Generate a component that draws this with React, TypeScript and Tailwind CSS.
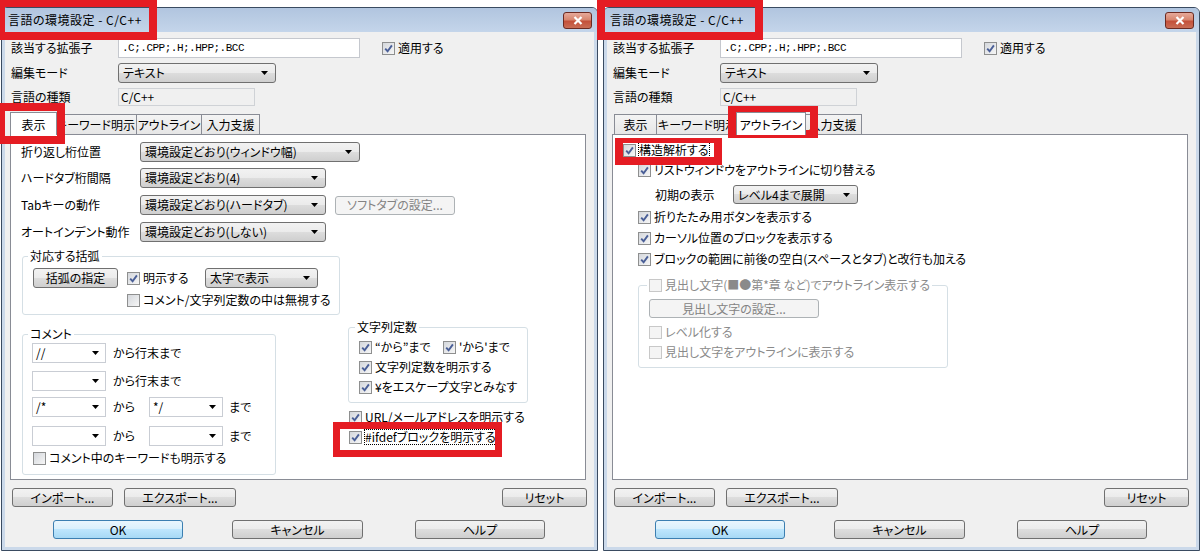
import React from "react";

const GRAD = "bg-[linear-gradient(#f2f2f2_0%,#ebebeb_50%,#dddddd_50%,#cfcfcf_100%)]";

function Arrow() {
  return (
    <svg width="7" height="4" viewBox="0 0 7 4" className="shrink-0">
      <path d="M0 0H7L3.5 4Z" fill="#000" />
    </svg>
  );
}

function Check({
  checked = false,
  disabled = false,
  focus = false,
  children,
}: {
  checked?: boolean;
  disabled?: boolean;
  focus?: boolean;
  children: React.ReactNode;
}) {
  return (
    <div className="flex items-center h-[16px]">
      <span
        className={`w-[13px] h-[13px] border flex items-center justify-center shrink-0 ${
          disabled
            ? "border-[#c8c8c8] bg-[#f4f4f4]"
            : "border-[#8e8f8f] bg-[linear-gradient(135deg,#d4d7dc,#f6f6f6)]"
        }`}
      >
        {checked && (
          <svg width="9" height="9" viewBox="0 0 9 9">
            <path d="M1.2 4.6 L3.6 7.2 L7.9 1.4" stroke="#4a5f97" strokeWidth="1.9" fill="none" />
          </svg>
        )}
      </span>
      <span
        className={`ml-[3px] whitespace-nowrap leading-[14px] ${disabled ? "text-[#8a8a8a]" : "text-black"} ${
          focus ? "outline-1 outline-dotted outline-black" : ""
        }`}
      >
        {children}
      </span>
    </div>
  );
}

function DropDown({ cls, text }: { cls: string; text: string }) {
  return (
    <div
      className={`${cls} flex items-center border border-[#707070] rounded-[3px] ${GRAD} pl-[4px] pr-[7px] shrink-0`}
    >
      <span className="flex-1 whitespace-nowrap overflow-hidden">{text}</span>
      <Arrow />
    </div>
  );
}

function Combo({ text }: { text: string }) {
  return (
    <div className="w-[74px] h-[20px] flex items-center border border-[#c9cdd4] bg-white pl-[3px] pr-[6px] shrink-0">
      <span className="flex-1 whitespace-nowrap">{text}</span>
      <Arrow />
    </div>
  );
}

function Btn({
  cls,
  kind = "normal",
  children,
}: {
  cls: string;
  kind?: "normal" | "default" | "disabled";
  children: React.ReactNode;
}) {
  const k =
    kind === "default"
      ? "border-[#3c7fb1] bg-[linear-gradient(#eaf6fd_0%,#d9f0fc_50%,#bee6fd_50%,#a7d9f5_100%)] text-black"
      : kind === "disabled"
      ? "border-[#adb2b5] bg-[#f4f4f4] text-[#838383]"
      : `border-[#707070] ${GRAD} text-black`;
  return (
    <div className={`${cls} flex items-center justify-center border rounded-[3px] shrink-0 whitespace-nowrap ${k}`}>
      {children}
    </div>
  );
}

function CloseBtn() {
  return (
    <div className="w-[29px] h-[17px] rounded-[3px] border border-[#6b2a22] bg-[linear-gradient(#e6a99a_0%,#d7866f_45%,#c4503a_55%,#c96d55_100%)] flex items-center justify-center">
      <svg width="10" height="9" viewBox="0 0 10 9">
        <path d="M1.5 1 L8.5 8 M8.5 1 L1.5 8" stroke="#ffffff" strokeWidth="2.2" />
      </svg>
    </div>
  );
}

const TABS: [string, string, string][] = [
  ["表示", "w-[43px]", "w-[47px]"],
  ["キーワード明示", "w-[83px]", "w-[87px]"],
  ["アウトライン", "w-[66px]", "w-[70px]"],
  ["入力支援", "w-[59px]", "w-[63px]"],
];

function Row({ label, lw, children, cls = "" }: { label: string; lw: string; children: React.ReactNode; cls?: string }) {
  return (
    <div className={`flex items-center ${cls}`}>
      <span className={`${lw} shrink-0 whitespace-nowrap`}>{label}</span>
      {children}
    </div>
  );
}

function Window({ tab, children }: { tab: number; children: React.ReactNode }) {
  return (
    <div className="w-[597px] h-[544px] border border-[#3a4b61] rounded-t-[6px] bg-[#cbd9ea] flex flex-col overflow-hidden shrink-0">
      <div className="h-[24px] flex items-center pl-[6px] pr-[5px] bg-[linear-gradient(#b1c5df,#c4d5ea)] shrink-0">
        <span className="flex-1 text-black tracking-[0.5px]">言語の環境設定 - C/C++</span>
        <CloseBtn />
      </div>
      <div className="mx-[3px] mb-[3px] flex-1 bg-[#f0f0f0] flex flex-col">
        {/* top rows */}
        <div className="pl-[6px] pt-[6px] flex flex-col">
          <Row label="該当する拡張子" lw="w-[107px]" cls="h-[20px]">
            <div className="w-[242px] h-[20px] border border-[#c5c8ce] bg-white flex items-center pl-[3px] font-['Liberation_Mono',monospace] text-[11px] tracking-[-0.5px]">
              .C;.CPP;.H;.HPP;.BCC
            </div>
            <div className="ml-[22px]">
              <Check checked>適用する</Check>
            </div>
          </Row>
          <Row label="編集モード" lw="w-[107px]" cls="h-[20px] mt-[5px]">
            <DropDown cls="w-[158px] h-[20px]" text="テキスト" />
          </Row>
          <Row label="言語の種類" lw="w-[107px]" cls="h-[18px] mt-[5px]">
            <div className="w-[137px] h-[18px] border border-[#cfd2d6] bg-[#f0f0f0] flex items-center pl-[2px]">
              C/C++
            </div>
          </Row>
        </div>
        {/* tabs */}
        <div className="mt-[6px] ml-[5px] h-[22px] flex items-end pl-[2px]">
          {TABS.map(([t, w, ws], i) => {
            const sel = i === tab;
            const first = i === 0;
            if (sel) {
              return (
                <div
                  key={t}
                  className={`${ws} h-[23px] -mb-[1px] relative z-10 bg-white border border-b-0 border-[#898c95] flex items-start justify-center pt-[4px] whitespace-nowrap ${
                    first ? "-ml-[2px] -mr-[2px]" : "-ml-[3px] -mr-[2px]"
                  }`}
                >
                  {t}
                </div>
              );
            }
            return (
              <div
                key={t}
                className={`${w} h-[20px] border border-b-0 border-[#898c95] bg-[linear-gradient(#f4f4f4,#e6e6e6)] flex items-center justify-center whitespace-nowrap ${
                  first ? "" : "-ml-[1px]"
                }`}
              >
                {t}
              </div>
            );
          })}
        </div>
        {/* panel */}
        <div className="ml-[5px] w-[576px] h-[346px] border border-[#898c95] bg-white shrink-0">{children}</div>
        {/* buttons row 1 */}
        <div className="mt-[8px] flex h-[19px] pl-[7px] pr-[7px]">
          <Btn cls="w-[101px] h-[19px]">インポート...</Btn>
          <Btn cls="ml-[11px] w-[112px] h-[19px]">エクスポート...</Btn>
          <div className="flex-1" />
          <Btn cls="w-[85px] h-[19px]">リセット</Btn>
        </div>
        {/* buttons row 2 */}
        <div className="mt-[13px] flex h-[19px]">
          <Btn cls="ml-[48px] w-[130px] h-[19px]" kind="default">
            OK
          </Btn>
          <Btn cls="ml-[49px] w-[131px] h-[19px]">キャンセル</Btn>
          <Btn cls="ml-[52px] w-[130px] h-[19px]">ヘルプ</Btn>
        </div>
      </div>
    </div>
  );
}

function Fieldset({
  cls,
  legend,
  lcls,
  children,
}: {
  cls: string;
  legend: React.ReactNode;
  lcls: string;
  children: React.ReactNode;
}) {
  return (
    <fieldset className={`${cls} border border-[#d5dfe5] rounded-[3px] p-0 m-0 shrink-0`}>
      <legend className={`${lcls} px-[2px]`}>{legend}</legend>
      {children}
    </fieldset>
  );
}

function LeftPanel() {
  return (
    <div className="pl-[10px] pt-[7px] flex flex-col">
      <Row label="折り返し桁位置" lw="w-[119px]" cls="h-[20px]">
        <DropDown cls="w-[220px] h-[20px]" text="環境設定どおり(ウィンドウ幅)" />
      </Row>
      <Row label="ハードタブ桁間隔" lw="w-[119px]" cls="h-[20px] mt-[6px]">
        <DropDown cls="w-[186px] h-[20px]" text="環境設定どおり(4)" />
      </Row>
      <Row label="Tabキーの動作" lw="w-[119px]" cls="h-[20px] mt-[7px]">
        <DropDown cls="w-[186px] h-[20px]" text="環境設定どおり(ハードタブ)" />
        <Btn cls="ml-[9px] w-[120px] h-[19px]" kind="disabled">
          ソフトタブの設定...
        </Btn>
      </Row>
      <Row label="オートインデント動作" lw="w-[119px]" cls="h-[20px] mt-[7px]">
        <DropDown cls="w-[186px] h-[20px]" text="環境設定どおり(しない)" />
      </Row>
      <Fieldset cls="ml-[1px] mt-[7px] w-[318px] h-[66px]" legend="対応する括弧" lcls="ml-[5px] leading-[14px]">
        <div className="pl-[10px] pt-[5px]">
          <div className="flex items-center h-[20px]">
            <Btn cls="w-[85px] h-[20px]">括弧の指定</Btn>
            <div className="ml-[9px] w-[78px]">
              <Check checked>明示する</Check>
            </div>
            <DropDown cls="w-[113px] h-[20px]" text="太字で表示" />
          </div>
          <div className="mt-[2px] ml-[94px] h-[20px] flex items-center">
            <Check>コメント/文字列定数の中は無視する</Check>
          </div>
        </div>
      </Fieldset>
      <div className="mt-[5px] flex items-start">
        <Fieldset cls="mt-[7px] ml-[1px] w-[254px] h-[148px]" legend="コメント" lcls="ml-[5px] leading-[14px]">
          <div className="pl-[9px] pt-[2px]">
            <div className="flex items-center h-[20px]">
              <Combo text="//" />
              <span className="ml-[7px]">から行末まで</span>
            </div>
            <div className="flex items-center h-[20px] mt-[8px]">
              <Combo text="" />
              <span className="ml-[7px]">から行末まで</span>
            </div>
            <div className="flex items-center h-[20px] mt-[6px]">
              <Combo text="/*" />
              <span className="w-[43px] pl-[7px] shrink-0">から</span>
              <Combo text="*/" />
              <span className="ml-[6px]">まで</span>
            </div>
            <div className="flex items-center h-[20px] mt-[9px]">
              <Combo text="" />
              <span className="w-[43px] pl-[7px] shrink-0">から</span>
              <Combo text="" />
              <span className="ml-[6px]">まで</span>
            </div>
            <div className="mt-[4px] ml-[1px]">
              <Check>コメント中のキーワードも明示する</Check>
            </div>
          </div>
        </Fieldset>
        <div className="ml-[72px] flex flex-col">
          <Fieldset cls="w-[180px] h-[83px]" legend="文字列定数" lcls="ml-[6px] leading-[14px]">
            <div className="pl-[10px] pt-[5px]">
              <div className="flex">
                <div className="w-[84px]">
                  <Check checked>“から”まで</Check>
                </div>
                <Check checked>'から'まで</Check>
              </div>
              <div className="mt-[4px]">
                <Check checked>文字列定数を明示する</Check>
              </div>
              <div className="mt-[4px]">
                <Check checked>¥をエスケープ文字とみなす</Check>
              </div>
            </div>
          </Fieldset>
          <div className="mt-[6px] ml-[1px]">
            <Check checked>URL/メールアドレスを明示する</Check>
          </div>
          <div className="mt-[4px] ml-[1px]">
            <Check checked focus>
              #ifdefブロックを明示する
            </Check>
          </div>
        </div>
      </div>
    </div>
  );
}

function RightPanel() {
  return (
    <div className="pl-[10px] pt-[7px] flex flex-col">
      <Check checked focus>
        構造解析する
      </Check>
      <div className="mt-[4px] ml-[15px]">
        <Check checked>リストウィンドウをアウトラインに切り替える</Check>
      </div>
      <div className="mt-[7px] ml-[32px] flex items-center h-[19px]">
        <span className="w-[78px] shrink-0">初期の表示</span>
        <DropDown cls="w-[125px] h-[19px]" text="レベル4まで展開" />
      </div>
      <div className="mt-[5px] ml-[15px]">
        <Check checked>折りたたみ用ボタンを表示する</Check>
      </div>
      <div className="mt-[5px] ml-[15px]">
        <Check checked>カーソル位置のブロックを表示する</Check>
      </div>
      <div className="mt-[5px] ml-[15px]">
        <Check checked>ブロックの範囲に前後の空白(スペースとタブ)と改行も加える</Check>
      </div>
      <Fieldset
        cls="mt-[10px] ml-[15px] w-[310px] h-[91px]"
        legend={<Check disabled>見出し文字(■●第*章 など)でアウトライン表示する</Check>}
        lcls="ml-[8px]"
      >
        <div className="pl-[10px] pt-[6px]">
          <Btn cls="w-[170px] h-[19px]" kind="disabled">
            見出し文字の設定...
          </Btn>
          <div className="mt-[6px]">
            <Check disabled>レベル化する</Check>
          </div>
          <div className="mt-[4px]">
            <Check disabled>見出し文字をアウトラインに表示する</Check>
          </div>
        </div>
      </Fieldset>
    </div>
  );
}

export default function App() {
  return (
    <div className="relative w-[1200px] h-[556px] bg-white overflow-hidden flex items-start pt-[7px] pl-[1px] gap-[5px] text-[12px] leading-[16px] text-black font-['Noto_Sans_CJK_JP','Noto_Sans',sans-serif] [font-feature-settings:'palt']">
      <Window tab={0}>
        <LeftPanel />
      </Window>
      <Window tab={2}>
        <RightPanel />
      </Window>
      {/* red highlight boxes */}
      <div className="absolute left-[-3px] top-[-1px] w-[160px] h-[41px] border-[8px] border-[#e51c23]" />
      <div className="absolute left-[-3px] top-[103px] w-[68px] h-[41px] border-[8px] border-[#e51c23]" />
      <div className="absolute left-[333px] top-[422px] w-[169px] h-[35px] border-[7px] border-[#e51c23]" />
      <div className="absolute left-[597px] top-[-1px] w-[166px] h-[41px] border-[8px] border-[#e51c23]" />
      <div className="absolute left-[728px] top-[106px] w-[90px] h-[32px] border-[8px] border-t-[6px] border-[#e51c23]" />
      <div className="absolute left-[615px] top-[138px] w-[107px] h-[27px] border-[8px] border-t-[5px] border-[#e51c23]" />
    </div>
  );
}
